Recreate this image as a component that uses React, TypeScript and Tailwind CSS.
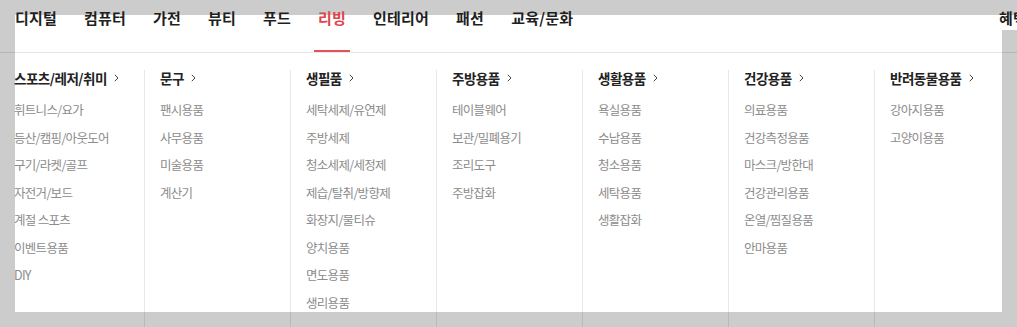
import React from "react";

const navItems = ["디지털", "컴퓨터", "가전", "뷰티", "푸드", "리빙", "인테리어", "패션", "교육/문화"];

const columns: { title: string; items: string[] }[] = [
  {
    title: "스포츠/레저/취미",
    items: ["휘트니스/요가", "등산/캠핑/아웃도어", "구기/라켓/골프", "자전거/보드", "계절 스포츠", "이벤트용품", "DIY"],
  },
  { title: "문구", items: ["팬시용품", "사무용품", "미술용품", "계산기"] },
  {
    title: "생필품",
    items: ["세탁세제/유연제", "주방세제", "청소세제/세정제", "제습/탈취/방향제", "화장지/물티슈", "양치용품", "면도용품", "생리용품"],
  },
  { title: "주방용품", items: ["테이블웨어", "보관/밀폐용기", "조리도구", "주방잡화"] },
  { title: "생활용품", items: ["욕실용품", "수납용품", "청소용품", "세탁용품", "생활잡화"] },
  { title: "건강용품", items: ["의료용품", "건강측정용품", "마스크/방한대", "건강관리용품", "온열/찜질용품", "안마용품"] },
  { title: "반려동물용품", items: ["강아지용품", "고양이용품"] },
];

function Chevron() {
  return (
    <svg width="5" height="8" viewBox="0 0 5 8" className="ml-[7px] inline-block" fill="none">
      <path d="M0.8 0.8 L4 4 L0.8 7.2" stroke="#444" strokeWidth="1" />
    </svg>
  );
}

export default function App() {
  return (
    <div className="h-[327px] w-full overflow-hidden bg-[#cccccc] pl-[15px] pt-[15px] font-['Noto_Sans_CJK_KR','Noto_Sans',sans-serif]">
      <div className="flex h-[297px] w-[987px] flex-col bg-white">
        <header className="-ml-[15px] -mt-[8px] flex w-[1017px] border-b border-black/10 pl-[11px]">
          {navItems.map((label) => {
            const active = label === "리빙";
            return (
              <a
                key={label}
                href="#"
                className={
                  "mr-[19px] h-[45px] px-[4px] text-[15px] font-bold leading-[21px] tracking-[0.2px] " +
                  (active ? "border-b-2 border-[#e5515a] text-[#e0444e]" : "text-[#1f1f1f]")
                }
              >
                {label}
              </a>
            );
          })}
          <a
            href="#"
            className="-mr-[14px] ml-auto h-[45px] shrink-0 bg-[linear-gradient(to_bottom,transparent_8px,#fff_8px,#fff_23px,transparent_23px)] px-[4px] text-[15px] font-bold leading-[21px] tracking-[0.2px] text-[#1f1f1f]"
          >
            혜택
          </a>
        </header>

        <div className="-ml-[17px] mt-[17px] flex">
          {columns.map((col) => (
            <div key={col.title} className="h-[258px] w-[146px] shrink-0 border-l border-black/[0.09] pl-[15px]">
              <a href="#" className="flex items-center text-[13.5px] font-bold leading-[16px] tracking-[-0.5px] text-[#222]">
                {col.title}
                <Chevron />
              </a>
              <ul className="mt-[10px]">
                {col.items.map((item) => (
                  <li key={item} className="text-[12.5px] leading-[27.5px] tracking-[-0.7px] text-[#8c8c8c]">
                    {item}
                  </li>
                ))}
              </ul>
            </div>
          ))}
        </div>
      </div>
    </div>
  );
}
